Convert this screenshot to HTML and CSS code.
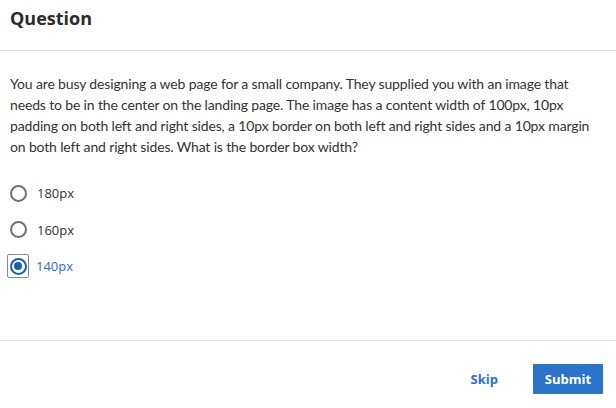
FILE: index.html
```html
<!DOCTYPE html>
<html>
<head>
<meta charset="utf-8">
<link rel="stylesheet" href="styles.css">
</head>
<body>
<div class="dialog">
  <header class="head"><h1 class="title">Question</h1></header>
  <main class="body">
    <p class="question">You are busy designing a web page for a small company. They supplied you with an image that needs to be in the center on the landing page. The image has a content width of 100px, 10px padding on both left and right sides, a 10px border on both left and right sides and a 10px margin on both left and right sides. What is the border box width?</p>
    <div class="options">
      <label class="option"><span class="radio"></span><span class="label">180px</span></label>
      <label class="option"><span class="radio"></span><span class="label">160px</span></label>
      <label class="option selected"><span class="focus"><span class="radio checked"></span></span><span class="label">140px</span></label>
    </div>
  </main>
  <footer class="foot">
    <button class="btn skip">Skip</button>
    <button class="btn submit">Submit</button>
  </footer>
</div>
</body>
</html>
```
FILE: styles.css
```css
* { box-sizing: border-box; }
html, body { margin: 0; padding: 0; background: #fff; }
body { width: 616px; height: 408px; overflow: hidden; font-family: "Lato", "Open Sans", sans-serif; }
.dialog { display: flex; flex-direction: column; height: 408px; }
.head { height: 51px; border-bottom: 1px solid #e3e3e3; padding: 5px 10px 0; }
.title { margin: 0; font-family: "Open Sans", sans-serif; font-weight: 700; font-size: 18px; line-height: 26px; color: #2b2b2b; }
.body { flex: 1; padding: 22px 10px 0; border-bottom: 1px solid #e3e3e3; }
.question { margin: 0; font-size: 14px; letter-spacing: -0.15px; line-height: 21px; color: #333; }
.options { display: flex; flex-direction: column; margin-top: 24px; gap: 12.5px; }
.option { display: flex; align-items: center; height: 24px; }
.focus { width: 22px; height: 24px; margin-left: -3px; margin-right: 7px; border: 1px solid #8a8a8a; border-radius: 2px; display: flex; align-items: center; justify-content: center; }
.radio { width: 17px; height: 17px; border: 2px solid #717171; border-radius: 50%; margin-right: 10px; display: block; }
.focus .radio { margin: 0; }
.radio.checked { border-color: #1a5fb4; position: relative; }
.radio.checked::after { content: ""; position: absolute; left: 2.5px; top: 2.5px; width: 8px; height: 8px; border-radius: 50%; background: #1a5fb4; }
.label { font-family: "Open Sans", sans-serif; font-size: 13px; color: #333; }
.selected .label { color: #2a72c9; }
.foot { height: 67px; display: flex; justify-content: flex-end; align-items: flex-start; padding: 23px 13px 0 0; gap: 35px; }
.btn { font-family: "Open Sans", sans-serif; font-weight: 700; font-size: 13px; border: none; cursor: pointer; height: 30px; }
.skip { background: none; color: #2a72c9; padding: 0; }
.submit { background: #2b72c9; color: #fff; width: 70px; padding: 0; border-radius: 1px; }
```
